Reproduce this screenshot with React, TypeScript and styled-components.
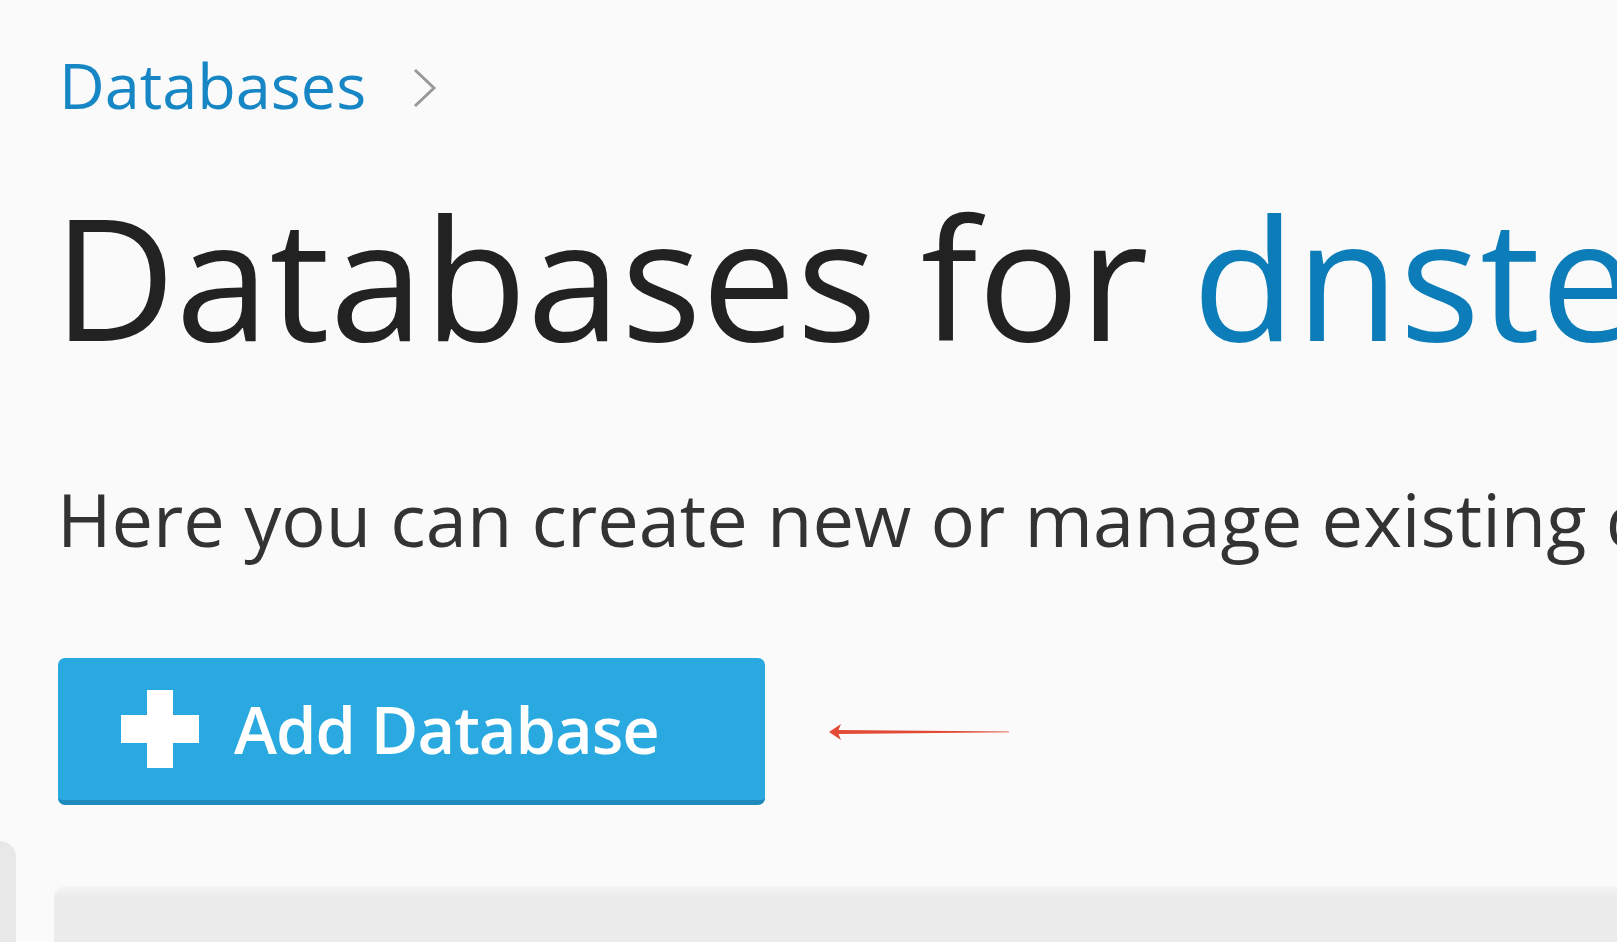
import { createGlobalStyle, styled } from 'styled-components';

const GlobalStyle = createGlobalStyle`
  html, body {
    margin: 0;
    padding: 0;
    background: #fafafa;
  }
  body {
    font-family: "Open Sans", "Noto Sans", "Liberation Sans", sans-serif;
  }
`;

const Page = styled.div`
  width: 100vw;
  height: 100vh;
  overflow: hidden;
  background: #fafafa;
  display: flex;
  flex-direction: column;
`;

const Content = styled.div`
  padding-left: 54px;
  white-space: nowrap;
`;

const Breadcrumb = styled.div`
  margin: 42px 0 0 5px;
  display: flex;
  align-items: center;
  gap: 46px;
  font-size: 63px;
  color: #1786c4;
`;

const Chevron = styled.svg`
  width: 26px;
  height: 40px;
  margin-top: 6px;
`;

const Title = styled.h1`
  margin: 33px 0 0 -1px;
  font-size: 169px;
  font-weight: 400;
  color: #222;

  span {
    color: #0c7db8;
  }
`;

const Intro = styled.p`
  margin: 77px 0 0 3px;
  font-size: 74px;
  color: #333;
`;

const ActionRow = styled.div`
  margin-top: 89px;
  display: flex;
  align-items: center;
  gap: 64px;
`;

const AddButton = styled.button`
  display: flex;
  align-items: center;
  gap: 35px;
  height: 147px;
  padding: 0 106px 0 63px;
  margin-left: 4px;
  border: none;
  border-bottom: 5px solid #1e89bd;
  border-radius: 7px;
  background: #29a9df;
  color: #fff;
  font-family: inherit;
  font-size: 65px;
  font-weight: 600;
  letter-spacing: -1px;
  cursor: pointer;

  svg {
    flex-shrink: 0;
  }
`;

const BottomArea = styled.div`
  flex: 1;
  display: flex;
  align-items: stretch;
`;

const SideStub = styled.div`
  width: 16px;
  margin-top: 36px;
  background: #e8e8e8;
  border-top-right-radius: 16px;
`;

const Panel = styled.div`
  flex: 1;
  margin: 81px 0 0 38px;
  border-top-left-radius: 12px;
  background: linear-gradient(#f6f6f6 0, #ececec 10px, #ececec 100%);
`;

export default function App() {
  return (
    <Page>
      <GlobalStyle />
      <Content>
        <Breadcrumb>
          Databases
          <Chevron viewBox="0 0 26 40">
            <path d="M3 2 L22 20 L3 38" fill="none" stroke="#999" strokeWidth="3" />
          </Chevron>
        </Breadcrumb>

        <Title>
          Databases for <span>dnstest.com</span>
        </Title>

        <Intro>Here you can create new or manage existing databases.</Intro>

        <ActionRow>
          <AddButton>
            <svg width="78" height="78" viewBox="0 0 78 78">
              <rect x="26" y="0" width="26" height="78" fill="#fff" />
              <rect x="0" y="25" width="78" height="28" fill="#fff" />
            </svg>
            Add Database
          </AddButton>
          <svg width="180" height="18" viewBox="0 0 180 18">
            <path d="M0 9 L12 1 L9.5 7 L180 8.6 L180 9.2 L9.5 11 L12 17 Z" fill="#e24a36" />
          </svg>
        </ActionRow>
      </Content>

      <BottomArea>
        <SideStub />
        <Panel />
      </BottomArea>
    </Page>
  );
}
